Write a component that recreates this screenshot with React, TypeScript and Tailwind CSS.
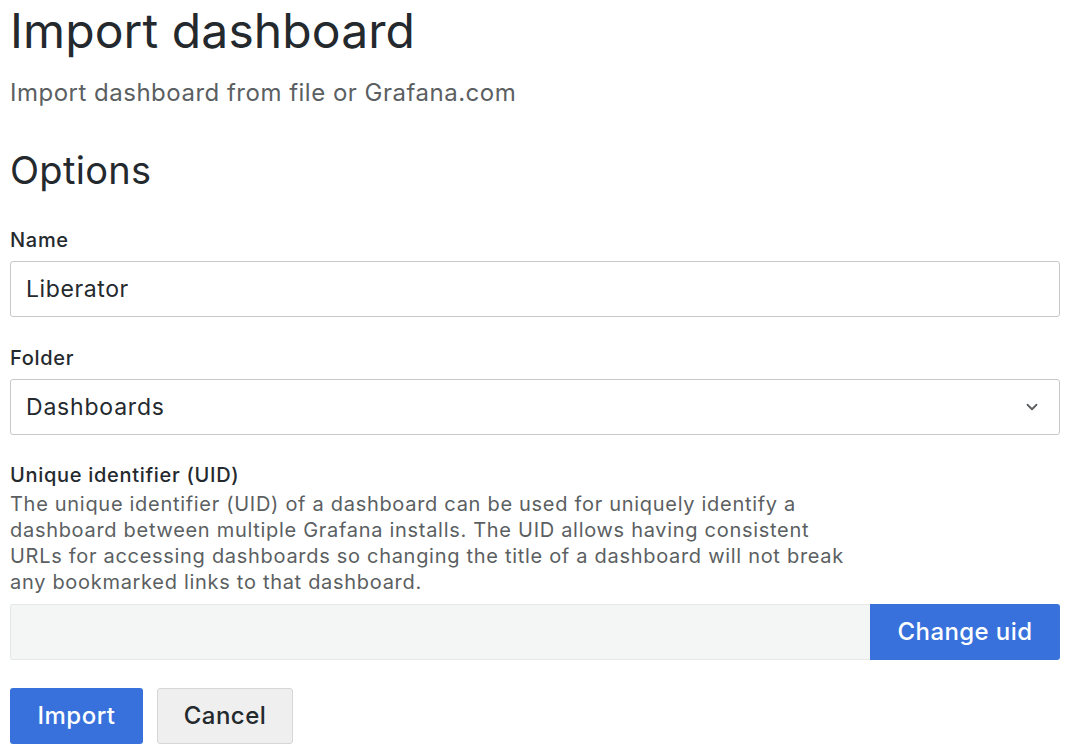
import React from "react";

const font = { fontFamily: "Inter, 'Noto Sans', sans-serif" };

function Label({ children }: { children: React.ReactNode }) {
  return (
    <label className="block text-[20px] leading-[24px] font-medium tracking-[0.7px] text-[#24292e]">{children}</label>
  );
}

export default function App() {
  return (
    <div style={font} className="min-h-screen bg-white pl-[10px] pr-[11px] pt-[2px] text-[#24292e]">
      <h1 className="text-[48px] leading-[58px] font-normal tracking-[0.1px]">Import dashboard</h1>
      <p className="mt-[15px] text-[24px] leading-[36px] tracking-[0.5px] text-[#5b5f62]">
        Import dashboard from file or Grafana.com
      </p>

      <h2 className="mt-[36px] text-[38px] leading-[46px] font-normal tracking-[0.3px]">Options</h2>

      <div className="mt-[35px]">
        <Label>Name</Label>
        <div className="mt-[9px] h-[56px] flex items-center rounded-[3px] border border-[#c7c8c9] px-[15px] text-[23px] tracking-[0.6px]">
          Liberator
        </div>
      </div>

      <div className="mt-[29px]">
        <Label>Folder</Label>
        <div className="mt-[9px] h-[56px] flex items-center justify-between rounded-[3px] border border-[#c7c8c9] pl-[15px] pr-[18px] text-[23px] tracking-[0.8px]">
          <span>Dashboards</span>
          <svg width="18" height="18" viewBox="0 0 24 24" fill="none" stroke="#5b5f62" strokeWidth="2.4" strokeLinecap="round" strokeLinejoin="round">
            <polyline points="6 9 12 15 18 9" />
          </svg>
        </div>
      </div>

      <div className="mt-[28px]">
        <Label>Unique identifier (UID)</Label>
        <p className="mt-[4px] w-[850px] text-[20px] leading-[26px] tracking-[0.7px] text-[#5b5f62]">
          The unique identifier (UID) of a dashboard can be used for uniquely identify a dashboard between multiple Grafana
          installs. The UID allows having consistent URLs for accessing dashboards so changing the title of a dashboard will
          not break any bookmarked links to that dashboard.
        </p>
        <div className="mt-[9px] flex h-[56px]">
          <div className="flex-1 rounded-l-[3px] border border-r-0 border-[#e6e7e8] bg-[#f4f5f5]" />
          <button className="w-[190px] rounded-r-[3px] bg-[#3871dc] text-[24px] font-medium tracking-[0.4px] text-white">
            Change uid
          </button>
        </div>
      </div>

      <div className="mt-[28px] flex gap-[14px]">
        <button className="h-[56px] w-[133px] rounded-[3px] bg-[#3871dc] text-[24px] font-medium tracking-[0.5px] text-white">
          Import
        </button>
        <button className="h-[56px] w-[136px] rounded-[3px] border border-[#d5d6d7] bg-[#efefef] text-[24px] font-medium tracking-[0.5px] text-[#24292e]">
          Cancel
        </button>
      </div>
    </div>
  );
}
